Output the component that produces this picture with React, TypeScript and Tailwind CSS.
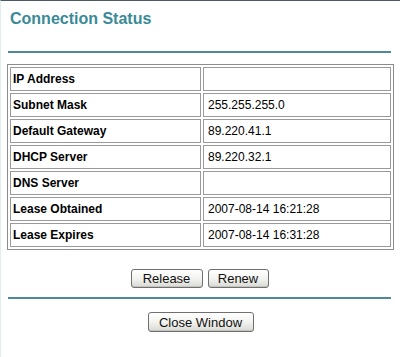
const rows: [string, string][] = [
  ["IP Address", ""],
  ["Subnet Mask", "255.255.255.0"],
  ["Default Gateway", "89.220.41.1"],
  ["DHCP Server", "89.220.32.1"],
  ["DNS Server", ""],
  ["Lease Obtained", "2007-08-14 16:21:28"],
  ["Lease Expires", "2007-08-14 16:31:28"],
];

const btn =
  "h-[19px] rounded-[3px] border border-[#6f6f6f] bg-gradient-to-b from-white via-[#f3f3f0] to-[#d9d9d4] text-[13px] leading-[17px] text-[#111] shadow-[inset_0_-1px_0_#c4c4be]";

export default function App() {
  return (
    <div className="h-[357px] w-[400px] overflow-hidden border-t border-l border-t-[#4d5a66] border-l-[#e3ecef] bg-white font-['Liberation_Sans',Arial,sans-serif]">
      <h1 className="ml-[9px] mt-[8px] text-[16px] font-bold leading-[20px] text-[#3a8a98]">
        Connection Status
      </h1>
      <div className="ml-[7px] mt-[22px] h-[2px] w-[383px] bg-[#4f8896]" />

      <table className="ml-[6px] mt-[11px] w-[387px] border-separate border-spacing-[2px] border border-[#8c8c8c] text-[12px] text-black">
        <tbody>
          {rows.map(([label, value]) => (
            <tr key={label}>
              <td className="h-[24px] w-[191px] border border-[#9a9a9a] pl-[2px] align-middle font-bold">
                {label}
              </td>
              <td className="h-[24px] border border-[#9a9a9a] pl-[4px] align-middle">
                {value}
              </td>
            </tr>
          ))}
        </tbody>
      </table>

      <div className="mt-[19px] flex justify-center gap-[5px] pr-[2px]">
        <button className={`${btn} w-[72px]`}>Release</button>
        <button className={`${btn} w-[61px]`}>Renew</button>
      </div>

      <div className="ml-[7px] mt-[9px] h-[2px] w-[383px] bg-[#4f8896]" />

      <div className="mt-[13px] flex justify-center">
        <button className={`${btn} h-[20px] w-[106px]`}>Close Window</button>
      </div>
    </div>
  );
}
